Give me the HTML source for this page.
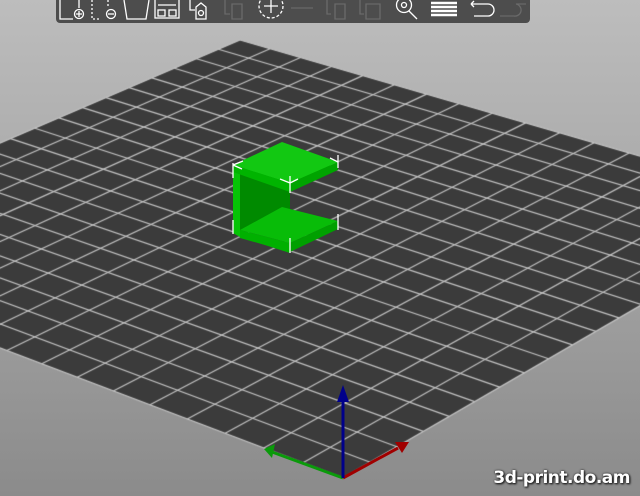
<!DOCTYPE html>
<html><head><meta charset="utf-8"><style>
html,body{margin:0;padding:0;width:640px;height:496px;overflow:hidden}
body{background:linear-gradient(#bdbdbd,#8b8b8b);position:relative;font-family:"Liberation Sans",sans-serif}
canvas,svg{position:absolute;left:0;top:0}
.wm{position:absolute;right:10px;top:468px;color:#fff;font-weight:bold;font-size:17px;font-family:"DejaVu Sans",sans-serif;letter-spacing:-0.5px;text-shadow:0 0 2px #222,1px 1px 2px #000}
</style></head><body>
<canvas id="c" width="640" height="496"></canvas>
<svg width="640" height="496" viewBox="0 0 640 496">
<path d="M56 0H530V19a4 4 0 0 1-4 4H60a4 4 0 0 1-4-4Z" fill="#4d4d4d"/>
<g fill="none" stroke="#fff" stroke-width="1.3">
<path d="M60 0V19H73M79 0V8"/><circle cx="79" cy="14" r="4.5"/><path d="M76 14h6M79 11v6"/>
<path d="M92 0V19H100M108 0V8" stroke-dasharray="2 2"/><circle cx="111" cy="14" r="4.5"/><path d="M108 14h6"/>
<path d="M124 0L127 19H146L149 0"/>
<rect x="155" y="-2" width="24" height="20"/><rect x="158" y="10" width="7" height="6"/><rect x="169" y="10" width="7" height="6"/><path d="M158 5h18"/>
<path d="M190 0V10H195"/><path d="M196 7L201 3L206 7V19H196Z"/><circle cx="201" cy="13" r="2.5"/>
<g stroke="#6a6a6a"><path d="M225 0V14H230M232 4h10v15H232Z"/><circle cx="271" cy="6" r="12" stroke="#fff" stroke-dasharray="3 2"/><path d="M291 8h22" /><path d="M327 0V14H331M335 4h10v15H335ZM360 0V14H364M366 4h14v15H366Z"/></g>
<path d="M264 6h14M271 -1v14"/>
<circle cx="404" cy="5" r="7.5"/><path d="M409 11L417 19"/><circle cx="404" cy="5" r="2.5"/>
<path d="M431 3h26M431 7h26M431 11h26M431 15h26" stroke-width="2.4"/>
<path d="M471 4L474 1M471 4L474 7M471 4H488A6 6 0 0 1 488 16H474"/>
<path d="M500 16H514A6 6 0 0 0 516 4H526" stroke="#6a6a6a"/>
</g>
<g stroke="none">
<polygon points="233,165 240,169 240,237 290,253 290,243 240,232 240,172 233,172" fill="#00b000"/>
<polygon points="233,165 233,233 240,237 240,169" fill="#06c406"/>
<polygon points="240,172 290,191 290,213 240,232" fill="#008a00"/>
<polygon points="240,172 282,149 338,168 290,191" fill="#00a000"/>
<polygon points="233,165 282,142 338,162 290,183" fill="#12c812"/>
<polygon points="290,183 338,162 338,170 290,192" fill="#00a400"/>
<polygon points="233,165 290,183 290,192 233,172" fill="#00b400"/>
<polygon points="240,230 282,207 338,221 290,243" fill="#08bc08"/>
<polygon points="240,230 290,243 290,252 240,238" fill="#00b000"/>
<polygon points="290,243 338,221 338,229 290,252" fill="#00a000"/>
</g>
<g stroke="#fff" stroke-width="1.3" fill="none">
<path d="M233 163V178M233 165L243 161M233 165L242 169M233 220V234"/>
<path d="M290 176V193M290 183L280 179M290 183L298 179"/>
<path d="M338 155V168M338 162L330 158M338 214V230"/>
<path d="M290 238V253"/>
</g>
<path d="M343 478L272 452" stroke="#0a9a0a" stroke-width="3"/><polygon points="264,449 275,444 272,458" fill="#0a9a0a"/>
<path d="M343 478L398 448" stroke="#a00000" stroke-width="3"/><polygon points="409,442 395,442 402,453" fill="#a00000"/>
<path d="M343 478V398" stroke="#00008a" stroke-width="3"/><polygon points="343,385 337,402 349,402" fill="#00008a"/>
</svg>
<div class="wm">3d-print.do.am</div>
<script>
function sq2q(p){var x0=p[0][0],y0=p[0][1],x1=p[1][0],y1=p[1][1],x2=p[2][0],y2=p[2][1],x3=p[3][0],y3=p[3][1];
var dx1=x1-x2,dx2=x3-x2,dy1=y1-y2,dy2=y3-y2,sx=x0-x1+x2-x3,sy=y0-y1+y2-y3;
var den=dx1*dy2-dx2*dy1,g=(sx*dy2-dx2*sy)/den,h=(dx1*sy-sx*dy1)/den;
var a=x1-x0+g*x1,b=x3-x0+h*x3,d=y1-y0+g*y1,e=y3-y0+h*y3;
return function(u,v){var w=g*u+h*v+1;return[(a*u+b*v+x0)/w,(d*u+e*v+y0)/w];};}
var H=sq2q([[343,478],[812,206],[240,40],[-253,252]]);
var c=document.getElementById('c').getContext('2d');
c.fillStyle='#3b3b3b';c.beginPath();
[[0,0],[1,0],[1,1],[0,1]].forEach(function(q,i){var p=H(q[0],q[1]);i?c.lineTo(p[0],p[1]):c.moveTo(p[0],p[1]);});
c.closePath();c.fill();
c.strokeStyle='#c4c4c4';c.lineWidth=1.2;
var NX=20,NY=17;
for(var i=0;i<=NX;i++){var a=H(i/NX,0),b=H(i/NX,1);c.beginPath();c.moveTo(a[0],a[1]);c.lineTo(b[0],b[1]);c.stroke();}
for(var j=0;j<=NY;j++){var a=H(0,j/NY),b=H(1,j/NY);c.beginPath();c.moveTo(a[0],a[1]);c.lineTo(b[0],b[1]);c.stroke();}
</script>
</body></html>
